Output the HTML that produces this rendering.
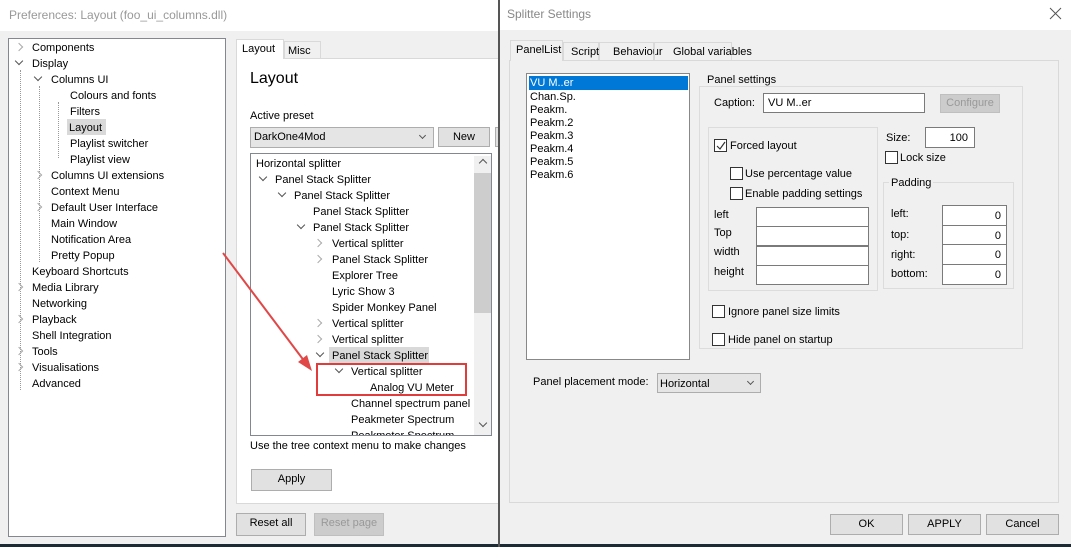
<!DOCTYPE html>
<html><head><meta charset="utf-8"><style>
*{box-sizing:border-box;margin:0;padding:0}
body{width:1071px;height:547px;position:relative;overflow:hidden;background:#1c2a35;font-family:"Liberation Sans",sans-serif;font-size:11px;color:#000}
.a{position:absolute;white-space:nowrap}
.btn{position:absolute;background:#e1e1e1;border:1px solid #adadad;text-align:center;line-height:19px}
.inp{position:absolute;background:#fff;border:1px solid #7a7a7a}
.cb{position:absolute;width:13px;height:13px;border:1px solid #333;background:#fff}
.grp{position:absolute;border:1px solid #dcdcdc}
.chev{position:absolute;width:6px;height:6px;border-right:1.5px solid #555;border-bottom:1.5px solid #555}
.dn{transform:rotate(45deg)}
.rt{transform:rotate(-45deg);border-color:#aaa}
.t div.a{margin-top:1px}
</style></head><body>
<!-- Left window -->
<div class="a" style="left:0;top:0;width:499px;height:544px;background:#f0f0f0"></div>
<div class="a" style="left:0;top:0;width:499px;height:31px;background:#fff"></div>
<div class="a" style="left:9px;top:8px;font-size:12px;color:#999">Preferences: Layout (foo_ui_columns.dll)</div>
<div class="a" style="left:8px;top:38px;width:218px;height:499px;background:#fff;border:1px solid #828790"></div>
<div class="a" style="left:20px;top:70px;height:320px;border-left:1px dotted #999"></div>
<div class="a" style="left:39px;top:86px;height:176px;border-left:1px dotted #999"></div>
<div class="a" style="left:58px;top:102px;height:56px;border-left:1px dotted #999"></div>
<div class="t" style="position:absolute;left:0;top:0;line-height:16px">
<div class="chev rt" style="left:16px;top:44px"></div><div class="a" style="left:32px;top:39px">Components</div>
<div class="chev dn" style="left:16px;top:58px"></div><div class="a" style="left:32px;top:55px">Display</div>
<div class="chev dn" style="left:35px;top:74px"></div><div class="a" style="left:51px;top:71px">Columns UI</div>
<div class="a" style="left:70px;top:87px">Colours and fonts</div>
<div class="a" style="left:70px;top:103px">Filters</div>
<div class="a" style="left:67px;top:119px;width:39px;height:16px;background:#d9d9d9;margin-top:0"></div>
<div class="a" style="left:69px;top:119px">Layout</div>
<div class="a" style="left:70px;top:135px">Playlist switcher</div>
<div class="a" style="left:70px;top:151px">Playlist view</div>
<div class="chev rt" style="left:35px;top:172px"></div><div class="a" style="left:51px;top:167px">Columns UI extensions</div>
<div class="a" style="left:51px;top:183px">Context Menu</div>
<div class="chev rt" style="left:35px;top:204px"></div><div class="a" style="left:51px;top:199px">Default User Interface</div>
<div class="a" style="left:51px;top:215px">Main Window</div>
<div class="a" style="left:51px;top:231px">Notification Area</div>
<div class="a" style="left:51px;top:247px">Pretty Popup</div>
<div class="a" style="left:32px;top:263px">Keyboard Shortcuts</div>
<div class="chev rt" style="left:16px;top:284px"></div><div class="a" style="left:32px;top:279px">Media Library</div>
<div class="a" style="left:32px;top:295px">Networking</div>
<div class="chev rt" style="left:16px;top:316px"></div><div class="a" style="left:32px;top:311px">Playback</div>
<div class="a" style="left:32px;top:327px">Shell Integration</div>
<div class="chev rt" style="left:16px;top:348px"></div><div class="a" style="left:32px;top:343px">Tools</div>
<div class="chev rt" style="left:16px;top:364px"></div><div class="a" style="left:32px;top:359px">Visualisations</div>
<div class="a" style="left:32px;top:375px">Advanced</div>
</div>
<!-- tabs -->
<div class="a" style="left:236px;top:58px;width:263px;height:446px;background:#fff;border:1px solid #d9d9d9"></div>
<div class="a" style="left:236px;top:39px;width:48px;height:20px;background:#fff;border:1px solid #d9d9d9;border-bottom:none"></div>
<div class="a" style="left:242px;top:43px">Layout</div>
<div class="a" style="left:284px;top:41px;width:37px;height:18px;background:#f0f0f0;border:1px solid #d9d9d9"></div>
<div class="a" style="left:288px;top:45px">Misc</div>
<div class="a" style="left:250px;top:70px;font-size:16px">Layout</div>
<div class="a" style="left:250px;top:110px">Active preset</div>
<div class="a" style="left:250px;top:127px;width:184px;height:21px;background:#e5e5e5;border:1px solid #adadad"></div>
<div class="a" style="left:254px;top:131px">DarkOne4Mod</div>
<div class="chev dn" style="left:420px;top:133px;width:5px;height:5px;border-width:1px"></div>
<div class="btn" style="left:438px;top:127px;width:52px;height:20px">New</div>
<div class="a" style="left:495px;top:127px;width:4px;height:20px;background:#e1e1e1;border:1px solid #adadad"></div>
<div class="a t" style="left:250px;top:153px;width:242px;height:283px;background:#fff;border:1px solid #828790;overflow:hidden;line-height:16px">
<div class="a" style="left:223px;top:1px;width:17px;height:280px;background:#f0f0f0"></div>
<div class="a" style="left:223px;top:18px;width:17px;height:140px;background:#cdcdcd"></div>
<div class="chev" style="left:229px;top:6px;transform:rotate(-135deg);border-color:#555"></div>
<div class="chev dn" style="left:229px;top:266px"></div>
<div class="a" style="left:5px;top:1px">Horizontal splitter</div>
<div class="chev dn" style="left:9px;top:20px"></div><div class="a" style="left:24px;top:17px">Panel Stack Splitter</div>
<div class="chev dn" style="left:28px;top:36px"></div><div class="a" style="left:43px;top:33px">Panel Stack Splitter</div>
<div class="a" style="left:62px;top:49px">Panel Stack Splitter</div>
<div class="chev dn" style="left:47px;top:68px"></div><div class="a" style="left:62px;top:65px">Panel Stack Splitter</div>
<div class="chev rt" style="left:64px;top:86px"></div><div class="a" style="left:81px;top:81px">Vertical splitter</div>
<div class="chev rt" style="left:64px;top:102px"></div><div class="a" style="left:81px;top:97px">Panel Stack Splitter</div>
<div class="a" style="left:81px;top:113px">Explorer Tree</div>
<div class="a" style="left:81px;top:129px">Lyric Show 3</div>
<div class="a" style="left:81px;top:145px">Spider Monkey Panel</div>
<div class="chev rt" style="left:64px;top:166px"></div><div class="a" style="left:81px;top:161px">Vertical splitter</div>
<div class="chev rt" style="left:64px;top:182px"></div><div class="a" style="left:81px;top:177px">Vertical splitter</div>
<div class="a" style="left:78px;top:193px;width:100px;height:16px;background:#d9d9d9;margin-top:0"></div>
<div class="chev dn" style="left:66px;top:196px"></div><div class="a" style="left:81px;top:193px">Panel Stack Splitter</div>
<div class="chev dn" style="left:85px;top:212px"></div><div class="a" style="left:100px;top:209px">Vertical splitter</div>
<div class="a" style="left:119px;top:225px">Analog VU Meter</div>
<div class="a" style="left:100px;top:241px">Channel spectrum panel</div>
<div class="a" style="left:100px;top:257px">Peakmeter Spectrum</div>
<div class="a" style="left:100px;top:273px">Peakmeter Spectrum</div>
</div>
<div class="a" style="left:316px;top:363px;width:151px;height:33px;border:2px solid #e03c3c"></div>
<svg class="a" style="left:0;top:0" width="499" height="400"><line x1="223" y1="253" x2="308" y2="366" stroke="#e04848" stroke-width="2"/><polygon points="312,371 298,362 307,355" fill="#e04848"/></svg>
<div class="a" style="left:250px;top:440px">Use the tree context menu to make changes</div>
<div class="btn" style="left:251px;top:469px;width:81px;height:22px">Apply</div>
<div class="btn" style="left:236px;top:513px;width:70px;height:23px">Reset all</div>
<div class="btn" style="left:314px;top:513px;width:70px;height:23px;color:#999;background:#ccc;border-color:#bfbfbf">Reset page</div>
<!-- right dialog -->
<div class="a" style="left:498px;top:0;width:2px;height:547px;background:#555"></div>
<div class="a" style="left:500px;top:0;width:571px;height:544px;background:#f0f0f0"></div>
<div class="a" style="left:500px;top:0;width:571px;height:30px;background:#fff"></div>
<div class="a" style="left:507px;top:7px;font-size:12px;color:#888">Splitter Settings</div>
<svg class="a" style="left:1049px;top:7px" width="13" height="13"><path d="M1 1L12 12M12 1L1 12" stroke="#555" stroke-width="1"/></svg>
<div class="a" style="left:509px;top:60px;width:550px;height:443px;border:1px solid #d9d9d9"></div>
<div class="a" style="left:563px;top:42px;width:36px;height:19px;border:1px solid #d9d9d9"></div><div class="a" style="left:571px;top:46px">Script</div>
<div class="a" style="left:599px;top:42px;width:55px;height:19px;border:1px solid #d9d9d9"></div><div class="a" style="left:613px;top:46px">Behaviour</div>
<div class="a" style="left:654px;top:42px;width:78px;height:19px;border:1px solid #d9d9d9"></div><div class="a" style="left:673px;top:46px">Global variables</div>
<div class="a" style="left:510px;top:40px;width:53px;height:21px;background:#f0f0f0;border:1px solid #d9d9d9;border-bottom:none"></div>
<div class="a" style="left:516px;top:44px">PanelList</div>
<div class="a" style="left:526px;top:73px;width:164px;height:287px;background:#fff;border:1px solid #888;line-height:13px">
<div class="a" style="left:2px;top:2px;width:159px;height:14px;background:#0078d7"></div>
<div class="a" style="left:3px;top:3px;color:#fff">VU M..er</div>
<div class="a" style="left:3px;top:17px">Chan.Sp.</div>
<div class="a" style="left:3px;top:30px">Peakm.</div>
<div class="a" style="left:3px;top:43px">Peakm.2</div>
<div class="a" style="left:3px;top:56px">Peakm.3</div>
<div class="a" style="left:3px;top:69px">Peakm.4</div>
<div class="a" style="left:3px;top:82px">Peakm.5</div>
<div class="a" style="left:3px;top:95px">Peakm.6</div>
</div>
<div class="grp" style="left:699px;top:86px;width:324px;height:263px"></div>
<div class="a" style="left:705px;top:74px;background:#f0f0f0;padding:0 2px">Panel settings</div>
<div class="a" style="left:714px;top:97px">Caption:</div>
<div class="inp" style="left:763px;top:93px;width:162px;height:20px"></div><div class="a" style="left:768px;top:97px">VU M..er</div>
<div class="btn" style="left:940px;top:94px;width:60px;height:19px;color:#999;background:#ccc;border-color:#bfbfbf;line-height:17px">Configure</div>
<div class="grp" style="left:708px;top:127px;width:170px;height:164px"></div>
<div class="cb" style="left:714px;top:139px"></div><svg class="a" style="left:715px;top:140px" width="12" height="12"><path d="M2 6L5 9L10 2" stroke="#333" stroke-width="1.2" fill="none"/></svg>
<div class="a" style="left:730px;top:140px">Forced layout</div>
<div class="cb" style="left:730px;top:167px"></div><div class="a" style="left:745px;top:168px">Use percentage value</div>
<div class="cb" style="left:730px;top:187px"></div><div class="a" style="left:745px;top:188px">Enable padding settings</div>
<div class="a" style="left:714px;top:209px">left</div>
<div class="a" style="left:714px;top:227px">Top</div>
<div class="a" style="left:714px;top:246px">width</div>
<div class="a" style="left:714px;top:266px">height</div>
<div class="inp" style="left:756px;top:207px;width:113px;height:20px"></div>
<div class="inp" style="left:756px;top:226px;width:113px;height:20px"></div>
<div class="inp" style="left:756px;top:246px;width:113px;height:20px"></div>
<div class="inp" style="left:756px;top:265px;width:113px;height:20px"></div>
<div class="a" style="left:886px;top:132px">Size:</div>
<div class="inp" style="left:925px;top:127px;width:50px;height:21px;text-align:right;padding:4px 6px 0 0">100</div>
<div class="cb" style="left:885px;top:151px"></div><div class="a" style="left:900px;top:152px">Lock size</div>
<div class="grp" style="left:883px;top:182px;width:131px;height:107px"></div>
<div class="a" style="left:889px;top:177px;background:#f0f0f0;padding:0 2px">Padding</div>
<div class="a" style="left:891px;top:208px">left:</div>
<div class="a" style="left:891px;top:229px">top:</div>
<div class="a" style="left:891px;top:249px">right:</div>
<div class="a" style="left:891px;top:268px">bottom:</div>
<div class="inp" style="left:942px;top:205px;width:65px;height:21px;text-align:right;padding:4px 5px 0 0">0</div>
<div class="inp" style="left:942px;top:225px;width:65px;height:21px;text-align:right;padding:4px 5px 0 0">0</div>
<div class="inp" style="left:942px;top:244px;width:65px;height:21px;text-align:right;padding:4px 5px 0 0">0</div>
<div class="inp" style="left:942px;top:264px;width:65px;height:21px;text-align:right;padding:4px 5px 0 0">0</div>
<div class="cb" style="left:712px;top:305px"></div><div class="a" style="left:728px;top:306px">Ignore panel size limits</div>
<div class="cb" style="left:712px;top:333px"></div><div class="a" style="left:728px;top:334px">Hide panel on startup</div>
<div class="a" style="left:533px;top:376px">Panel placement mode:</div>
<div class="a" style="left:657px;top:373px;width:104px;height:20px;background:#e5e5e5;border:1px solid #adadad"></div>
<div class="a" style="left:660px;top:378px">Horizontal</div>
<div class="chev dn" style="left:748px;top:379px;width:5px;height:5px;border-width:1px"></div>
<div class="btn" style="left:830px;top:514px;width:73px;height:21px">OK</div>
<div class="btn" style="left:908px;top:514px;width:73px;height:21px">APPLY</div>
<div class="btn" style="left:986px;top:514px;width:73px;height:21px">Cancel</div>
</body></html>
